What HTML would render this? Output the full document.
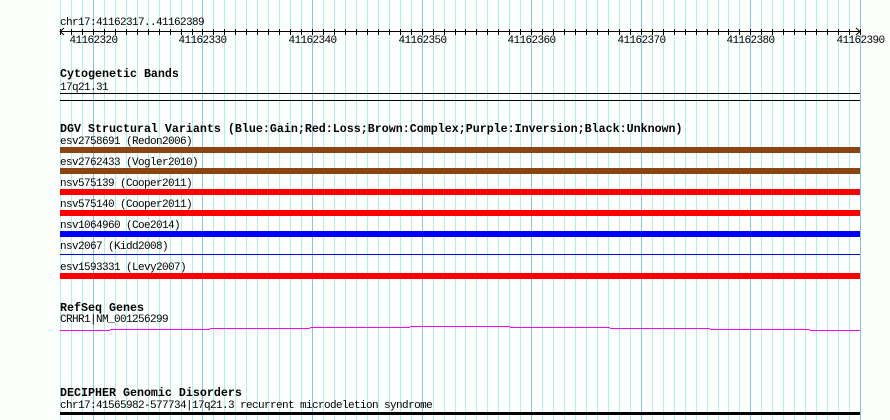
<!DOCTYPE html>
<html><head><meta charset="utf-8"><style>
html,body{margin:0;padding:0;background:#fff;}
svg{display:block;}
text{font-family:"Liberation Mono","DejaVu Sans Mono",monospace;font-size:11px;letter-spacing:-0.6px;fill:#000;}
.b{font-weight:bold;font-size:11.67px;letter-spacing:0;}
</style></head><body>
<svg width="890" height="420" xmlns="http://www.w3.org/2000/svg" id="s">
<rect width="890" height="420" fill="#fdfffd"/>
<g id="grid"></g>
<g id="ticks"></g>
<line x1="60" y1="31.5" x2="860" y2="31.5" stroke="#000"/>
<path d="M64 28 L60 31.5 L64 35" fill="none" stroke="#000"/>
<path d="M856 28 L860 31.5 L856 35" fill="none" stroke="#000"/>
<text x="60" y="25">chr17:41162317..41162389</text>
<g id="nums"></g>
<text class="b" x="60" y="77">Cytogenetic Bands</text>
<text x="60" y="90">17q21.31</text>
<rect x="60" y="93" width="800" height="1" fill="#000"/>
<rect x="60" y="100" width="800" height="1" fill="#000"/>
<text class="b" x="60" y="132">DGV Structural Variants (Blue:Gain;Red:Loss;Brown:Complex;Purple:Inversion;Black:Unknown)</text>
<text x="60" y="144">esv2758691 (Redon2006)</text>
<rect x="60" y="147" width="800" height="6" fill="#8b4513"/>
<text x="60" y="165">esv2762433 (Vogler2010)</text>
<rect x="60" y="168" width="800" height="6" fill="#8b4513"/>
<text x="60" y="186">nsv575139 (Cooper2011)</text>
<rect x="60" y="189" width="800" height="6" fill="#ff0000"/>
<text x="60" y="207">nsv575140 (Cooper2011)</text>
<rect x="60" y="210" width="800" height="6" fill="#ff0000"/>
<text x="60" y="228">nsv1064960 (Coe2014)</text>
<rect x="60" y="231" width="800" height="6" fill="#0000ff"/>
<text x="60" y="249">nsv2067 (Kidd2008)</text>
<rect x="60" y="254" width="800" height="1" fill="#0000ff"/>
<text x="60" y="270">esv1593331 (Levy2007)</text>
<rect x="60" y="273" width="800" height="6" fill="#ff0000"/>
<text class="b" x="60" y="311">RefSeq Genes</text>
<text x="60" y="322">CRHR1|NM_001256299</text>
<g fill="#ff00ff">
<rect x="60" y="330" width="50" height="1"/>
<rect x="110" y="329" width="100" height="1"/>
<rect x="210" y="328" width="100" height="1"/>
<rect x="310" y="327" width="100" height="1"/>
<rect x="410" y="326" width="100" height="1"/>
<rect x="510" y="327" width="100" height="1"/>
<rect x="610" y="328" width="100" height="1"/>
<rect x="710" y="329" width="100" height="1"/>
<rect x="810" y="330" width="50" height="1"/>
</g>
<text class="b" x="60" y="396">DECIPHER Genomic Disorders</text>
<text x="60" y="408">chr17:41565982-577734|17q21.3 recurrent microdeletion syndrome</text>
<rect x="60" y="412" width="800" height="3" fill="#000"/>
</svg>
<script>
var ns="http://www.w3.org/2000/svg",g=document.getElementById("grid"),t=document.getElementById("ticks"),n=document.getElementById("nums");
for(var i=0;i<=73;i++){var x=Math.round(60+i*800/73)+0.5;var maj=(i%10==3);
var l=document.createElementNS(ns,"line");l.setAttribute("x1",x);l.setAttribute("x2",x);l.setAttribute("y1",0);l.setAttribute("y2",420);l.setAttribute("stroke",maj?"#80c8e8":"#b0eef0");g.appendChild(l);
var k=document.createElementNS(ns,"line");k.setAttribute("x1",x);k.setAttribute("x2",x);k.setAttribute("y1",29);k.setAttribute("y2",35);k.setAttribute("stroke","#000");t.appendChild(k);
if(maj){var tx=document.createElementNS(ns,"text");tx.setAttribute("x",x);tx.setAttribute("y",43);tx.setAttribute("text-anchor","middle");tx.textContent=String(41162317+i);n.appendChild(tx);}}
</script>
</body></html>
